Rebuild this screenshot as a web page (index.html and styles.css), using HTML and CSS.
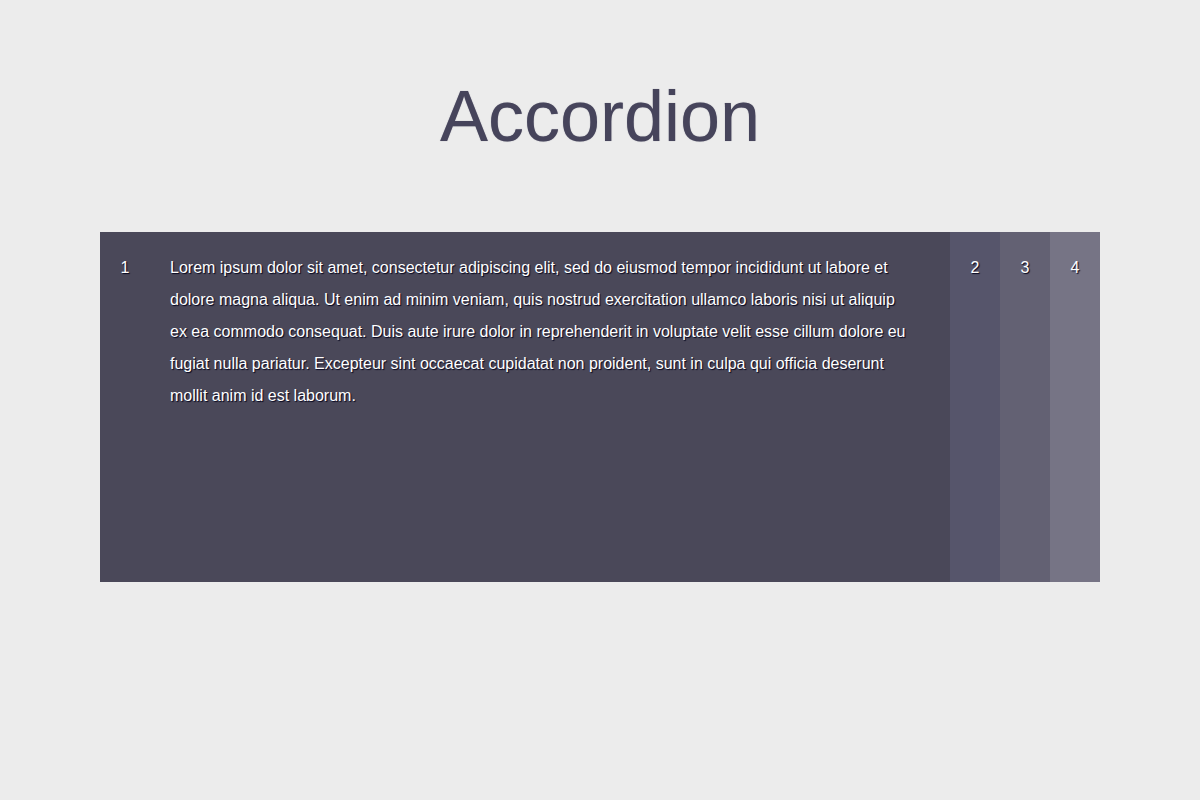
FILE: index.html
```html
<!DOCTYPE html>
<html lang="en">
<head>
<meta charset="utf-8">
<title>Accordion</title>
<link rel="stylesheet" href="styles.css">
</head>
<body>
<h1 class="title">Accordion</h1>
<div class="accordion">
  <div class="panel panel-1 open">
    <div class="label">1</div>
    <div class="content">Lorem ipsum dolor sit amet, consectetur adipiscing elit, sed do eiusmod tempor incididunt ut labore et dolore magna aliqua. Ut enim ad minim veniam, quis nostrud exercitation ullamco laboris nisi ut aliquip ex ea commodo consequat. Duis aute irure dolor in reprehenderit in voluptate velit esse cillum dolore eu fugiat nulla pariatur. Excepteur sint occaecat cupidatat non proident, sunt in culpa qui officia deserunt mollit anim id est laborum.</div>
  </div>
  <div class="panel panel-2"><div class="label">2</div></div>
  <div class="panel panel-3"><div class="label">3</div></div>
  <div class="panel panel-4"><div class="label">4</div></div>
</div>
</body>
</html>
```
FILE: styles.css
```css
html, body {
  margin: 0;
  padding: 0;
}
body {
  background: #ececec;
  font-family: "Liberation Sans", Arial, sans-serif;
  padding-top: 75px;
}
.title {
  margin: 0 0 74px;
  text-align: center;
  font-size: 72px;
  font-weight: normal;
  line-height: 83px;
  color: #46445b;
  text-shadow: 0 0 1px rgba(20, 20, 50, 0.35);
}
.accordion {
  display: flex;
  width: 1000px;
  height: 350px;
  margin: 0 auto;
}
.panel {
  display: flex;
  width: 50px;
  color: #fff;
  font-size: 16px;
  line-height: 32px;
  text-shadow: 1px 1px 1px #05051e;
}
.panel.open {
  flex: 1;
}
.panel-1 { background: #4a4859; }
.panel-2 { background: #56556b; }
.panel-3 { background: #636173; }
.panel-4 { background: #767485; }
.label {
  width: 50px;
  flex: none;
  text-align: center;
  padding-top: 20px;
}
.content {
  flex: 1;
  padding: 20px 40px 0 20px;
}
```
